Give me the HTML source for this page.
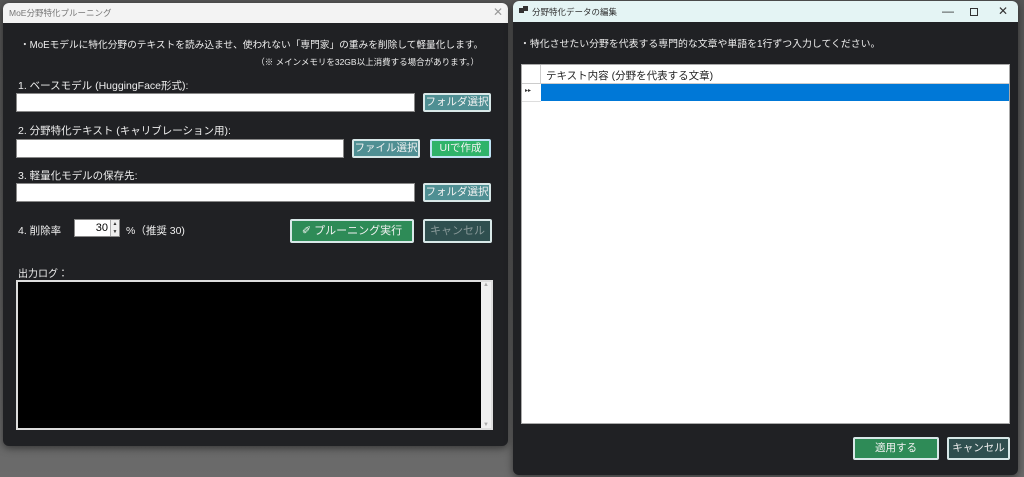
<!DOCTYPE html>
<html><head><meta charset="utf-8"><style>
*{margin:0;padding:0;box-sizing:border-box}
body{width:1024px;height:477px;overflow:hidden;background:linear-gradient(#555 0,#5e5e5e 60%,#6b6b6b 100%);font-family:"Liberation Sans","Noto Sans CJK JP",sans-serif;position:relative;color:#eee}
.a{position:absolute}
.win{background:#202124;border-radius:6px;overflow:hidden;box-shadow:0 2px 8px rgba(0,0,0,.5)}
.t{font-size:10.5px;white-space:nowrap}
.in{background:#fff;border:1px solid #888}
.btn{position:absolute;font-size:10.5px;text-align:center;border:2px solid #d8e8e8;border-radius:2px;color:#f2f2f2;line-height:15px;white-space:nowrap;overflow:hidden}
.teal{background:#4f8f93}
.grn{background:#2e8b57}
.dk{background:#2f4f4f;color:#8a9a9a}
</style></head><body>
<div class="a win" style="left:3px;top:3px;width:505px;height:443px">
 <div class="a" style="left:0;top:0;width:505px;height:20px;background:#f3f3f3"></div>
 <div class="a t" style="left:6px;top:4px;font-size:8.5px;color:#777">MoE分野特化プルーニング</div>
 <div class="a t" style="left:490px;top:2px;font-size:12px;color:#999">✕</div>
 <div class="a t" style="left:17px;top:34px;font-size:9.7px">・MoEモデルに特化分野のテキストを読み込ませ、使われない「専門家」の重みを削除して軽量化します。</div>
 <div class="a t" style="right:29px;top:53px;font-size:8.5px">（※ メインメモリを32GB以上消費する場合があります。）</div>
 <div class="a t" style="left:15px;top:75px">1. ベースモデル (HuggingFace形式):</div>
 <div class="a in" style="left:13px;top:90px;width:399px;height:19px"></div>
 <div class="btn teal" style="left:420px;top:90px;width:68px;height:19px">フォルダ選択</div>
 <div class="a t" style="left:15px;top:120px">2. 分野特化テキスト (キャリブレーション用):</div>
 <div class="a in" style="left:13px;top:136px;width:328px;height:19px"></div>
 <div class="btn teal" style="left:349px;top:136px;width:68px;height:19px">ファイル選択</div>
 <div class="btn" style="left:427px;top:136px;width:61px;height:19px;background:#2fb36a;border-color:#bfe3f5">UIで作成</div>
 <div class="a t" style="left:15px;top:165px">3. 軽量化モデルの保存先:</div>
 <div class="a in" style="left:13px;top:180px;width:399px;height:19px"></div>
 <div class="btn teal" style="left:420px;top:180px;width:68px;height:19px">フォルダ選択</div>
 <div class="a t" style="left:15px;top:220px">4. 削除率</div>
 <div class="a in" style="left:71px;top:216px;width:46px;height:18px;color:#000;font-size:11px;text-align:right;padding-right:11px;line-height:16px">30</div>
 <div class="a" style="left:107px;top:217px;width:9px;height:16px;background:#eee;border-left:1px solid #aaa;font-size:5px;color:#333;text-align:center;line-height:8px">▲<br>▼</div>
 <div class="a t" style="left:123px;top:220px">%（推奨 30)</div>
 <div class="btn grn" style="left:287px;top:216px;width:124px;height:24px;line-height:20px;font-size:11px">✐ プルーニング実行</div>
 <div class="btn dk" style="left:420px;top:216px;width:69px;height:24px;line-height:20px;font-size:11px">キャンセル</div>
 <div class="a t" style="left:15px;top:262px;font-size:10px">出力ログ：</div>
 <div class="a" style="left:13px;top:277px;width:477px;height:150px;background:#000;border:2px solid #ddd"></div>
 <div class="a" style="left:478px;top:279px;width:10px;height:146px;background:#f0f0f0;font-size:6px;color:#aaa;text-align:center">▲<div style="position:absolute;bottom:0;width:10px">▼</div></div>
</div>
<div class="a win" style="left:513px;top:1px;width:505px;height:474px">
 <div class="a" style="left:0;top:0;width:505px;height:21px;background:#e4f4f4"></div>
 <div class="a" style="left:6px;top:7px;width:5px;height:5px;background:#333"></div>
 <div class="a" style="left:10px;top:5px;width:5px;height:5px;background:#333"></div>
 <div class="a t" style="left:19px;top:5px;font-size:8.5px;color:#333">分野特化データの編集</div>
 <div class="a t" style="left:429px;top:3px;font-size:12px;color:#333">—</div>
 <div class="a" style="left:457px;top:7px;width:8px;height:8px;border:1px solid #333"></div>
 <div class="a t" style="left:485px;top:3px;font-size:12px;color:#333">✕</div>
 <div class="a t" style="left:7px;top:35px;font-size:9.9px">・特化させたい分野を代表する専門的な文章や単語を1行ずつ入力してください。</div>
 <div class="a" style="left:8px;top:63px;width:489px;height:360px;background:#fff;border:1px solid #aaa"></div>
 <div class="a" style="left:9px;top:64px;width:19px;height:19px;border-right:1px solid #ccc;border-bottom:1px solid #ccc"></div>
 <div class="a" style="left:28px;top:82px;width:468px;height:1px;background:#ccc"></div>
 <div class="a t" style="left:33px;top:67px;color:#222">テキスト内容 (分野を代表する文章)</div>
 <div class="a" style="left:28px;top:83px;width:468px;height:17px;background:#0078d7"></div>
 <div class="a t" style="left:12px;top:86px;font-size:6px;color:#333">▸▸</div>
 <div class="a" style="left:9px;top:100px;width:19px;height:1px;background:#ddd"></div>
 <div class="btn grn" style="left:340px;top:436px;width:86px;height:23px;line-height:19px">適用する</div>
 <div class="btn dk" style="left:434px;top:436px;width:63px;height:23px;line-height:19px;color:#eee">キャンセル</div>
</div>
</body></html>
